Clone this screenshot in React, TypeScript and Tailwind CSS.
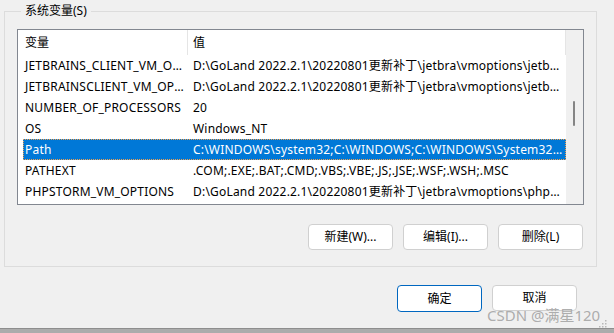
const font = { fontFamily: '"Noto Sans", "Noto Sans CJK SC", sans-serif' };

const rows = [
  ["JETBRAINS_CLIENT_VM_OPTIONS", "D:\\GoLand 2022.2.1\\20220801更新补丁\\jetbra\\vmoptions\\jetbrains_client.vmoptions"],
  ["JETBRAINSCLIENT_VM_OPTIONS", "D:\\GoLand 2022.2.1\\20220801更新补丁\\jetbra\\vmoptions\\jetbrainsclient.vmoptions"],
  ["NUMBER_OF_PROCESSORS", "20"],
  ["OS", "Windows_NT"],
  ["Path", "C:\\WINDOWS\\system32;C:\\WINDOWS;C:\\WINDOWS\\System32\\Wbem;C:\\WINDOWS\\System32\\WindowsPowerShell\\v1.0\\"],
  ["PATHEXT", ".COM;.EXE;.BAT;.CMD;.VBS;.VBE;.JS;.JSE;.WSF;.WSH;.MSC"],
  ["PHPSTORM_VM_OPTIONS", "D:\\GoLand 2022.2.1\\20220801更新补丁\\jetbra\\vmoptions\\phpstorm.vmoptions"],
];

function Btn({ label, primary }: { label: string; primary?: boolean }) {
  return (
    <button
      className={
        "w-[85px] rounded-[4px] bg-white text-[12px] text-black flex items-center justify-center " +
        (primary ? "border border-[#0067c0] h-[27px]" : "border border-[#d0d0d0] h-[26px]")
      }
    >
      {label}
    </button>
  );
}

export default function App() {
  return (
    <div className="relative w-[614px] h-[333px] bg-[#f0f0f0] overflow-hidden flex flex-col" style={font}>
      <div className="h-[328px] flex flex-col">
        {/* 系统变量 group */}
        <fieldset className="ml-[4px] mt-[3px] w-[592px] border border-[#dcdcdc] pl-[12px] pr-[12px] pb-[16px]">
          <legend className="ml-[4px] px-[4px] text-[12px] leading-4 text-black">系统变量(S)</legend>
          <div className="mt-[10px] w-[567px] h-[176px] border border-[#828790] bg-white flex overflow-hidden">
            <div className="flex-1 min-w-0 flex flex-col">
              {/* header */}
              <div className="h-[25px] flex shrink-0 text-[12px] text-black">
                <div className="w-[170px] pl-[7px] flex items-center border-r border-[#e5e5e5]">变量</div>
                <div className="flex-1 pl-[5px] flex items-center border-r border-[#e5e5e5]">值</div>
              </div>
              {rows.map(([name, value]) => {
                const sel = name === "Path";
                return (
                  <div
                    key={name}
                    className={
                      "ml-[5px] h-[21px] shrink-0 flex items-center text-[12px] tracking-[0.2px] " +
                      (sel ? "bg-[#0078d7] text-white outline outline-1 outline-dotted outline-[#f0a050] -outline-offset-1" : "text-black")
                    }
                  >
                    <div className="w-[164px] shrink-0 overflow-hidden pl-[2px] pr-[3px] truncate">{name}</div>
                    <div className="flex-1 min-w-0 overflow-hidden pl-[6px] pr-[3px] truncate">{value}</div>
                  </div>
                );
              })}
            </div>
            {/* scrollbar */}
            <div className="w-[17px] shrink-0 bg-[#f0f0f0] relative">
              <div className="absolute left-[7px] top-[71px] w-[2px] h-[25px] bg-[#858585] rounded-full" />
            </div>
          </div>
          <div className="mt-[19px] flex justify-end gap-[10px] pr-[1px]">
            <Btn label="新建(W)..." />
            <Btn label="编辑(I)..." />
            <Btn label="删除(L)" />
          </div>
        </fieldset>

        <div className="mt-[18px] flex justify-end gap-[10px] pr-[37px]">
          <Btn label="确定" primary />
          <Btn label="取消" />
        </div>
      </div>
      <div className="h-[5px] bg-[#acacac] border-t border-[#8e8e8e]" />

      {/* watermark */}
      <div className="absolute left-[487px] top-[305px] text-[15px] leading-5 text-[#a4a4a4]/90">
        CSDN @满星120
      </div>
      {/* resize grip */}
      <svg className="absolute left-[599px] top-[320px]" width="8" height="8" viewBox="0 0 8 8">
        <rect x="6" y="0" width="1.5" height="1.5" fill="#b8b8b8" />
        <rect x="3" y="3" width="1.5" height="1.5" fill="#b8b8b8" />
        <rect x="6" y="3" width="1.5" height="1.5" fill="#b8b8b8" />
        <rect x="0" y="6" width="1.5" height="1.5" fill="#b8b8b8" />
        <rect x="3" y="6" width="1.5" height="1.5" fill="#b8b8b8" />
        <rect x="6" y="6" width="1.5" height="1.5" fill="#b8b8b8" />
      </svg>
    </div>
  );
}
